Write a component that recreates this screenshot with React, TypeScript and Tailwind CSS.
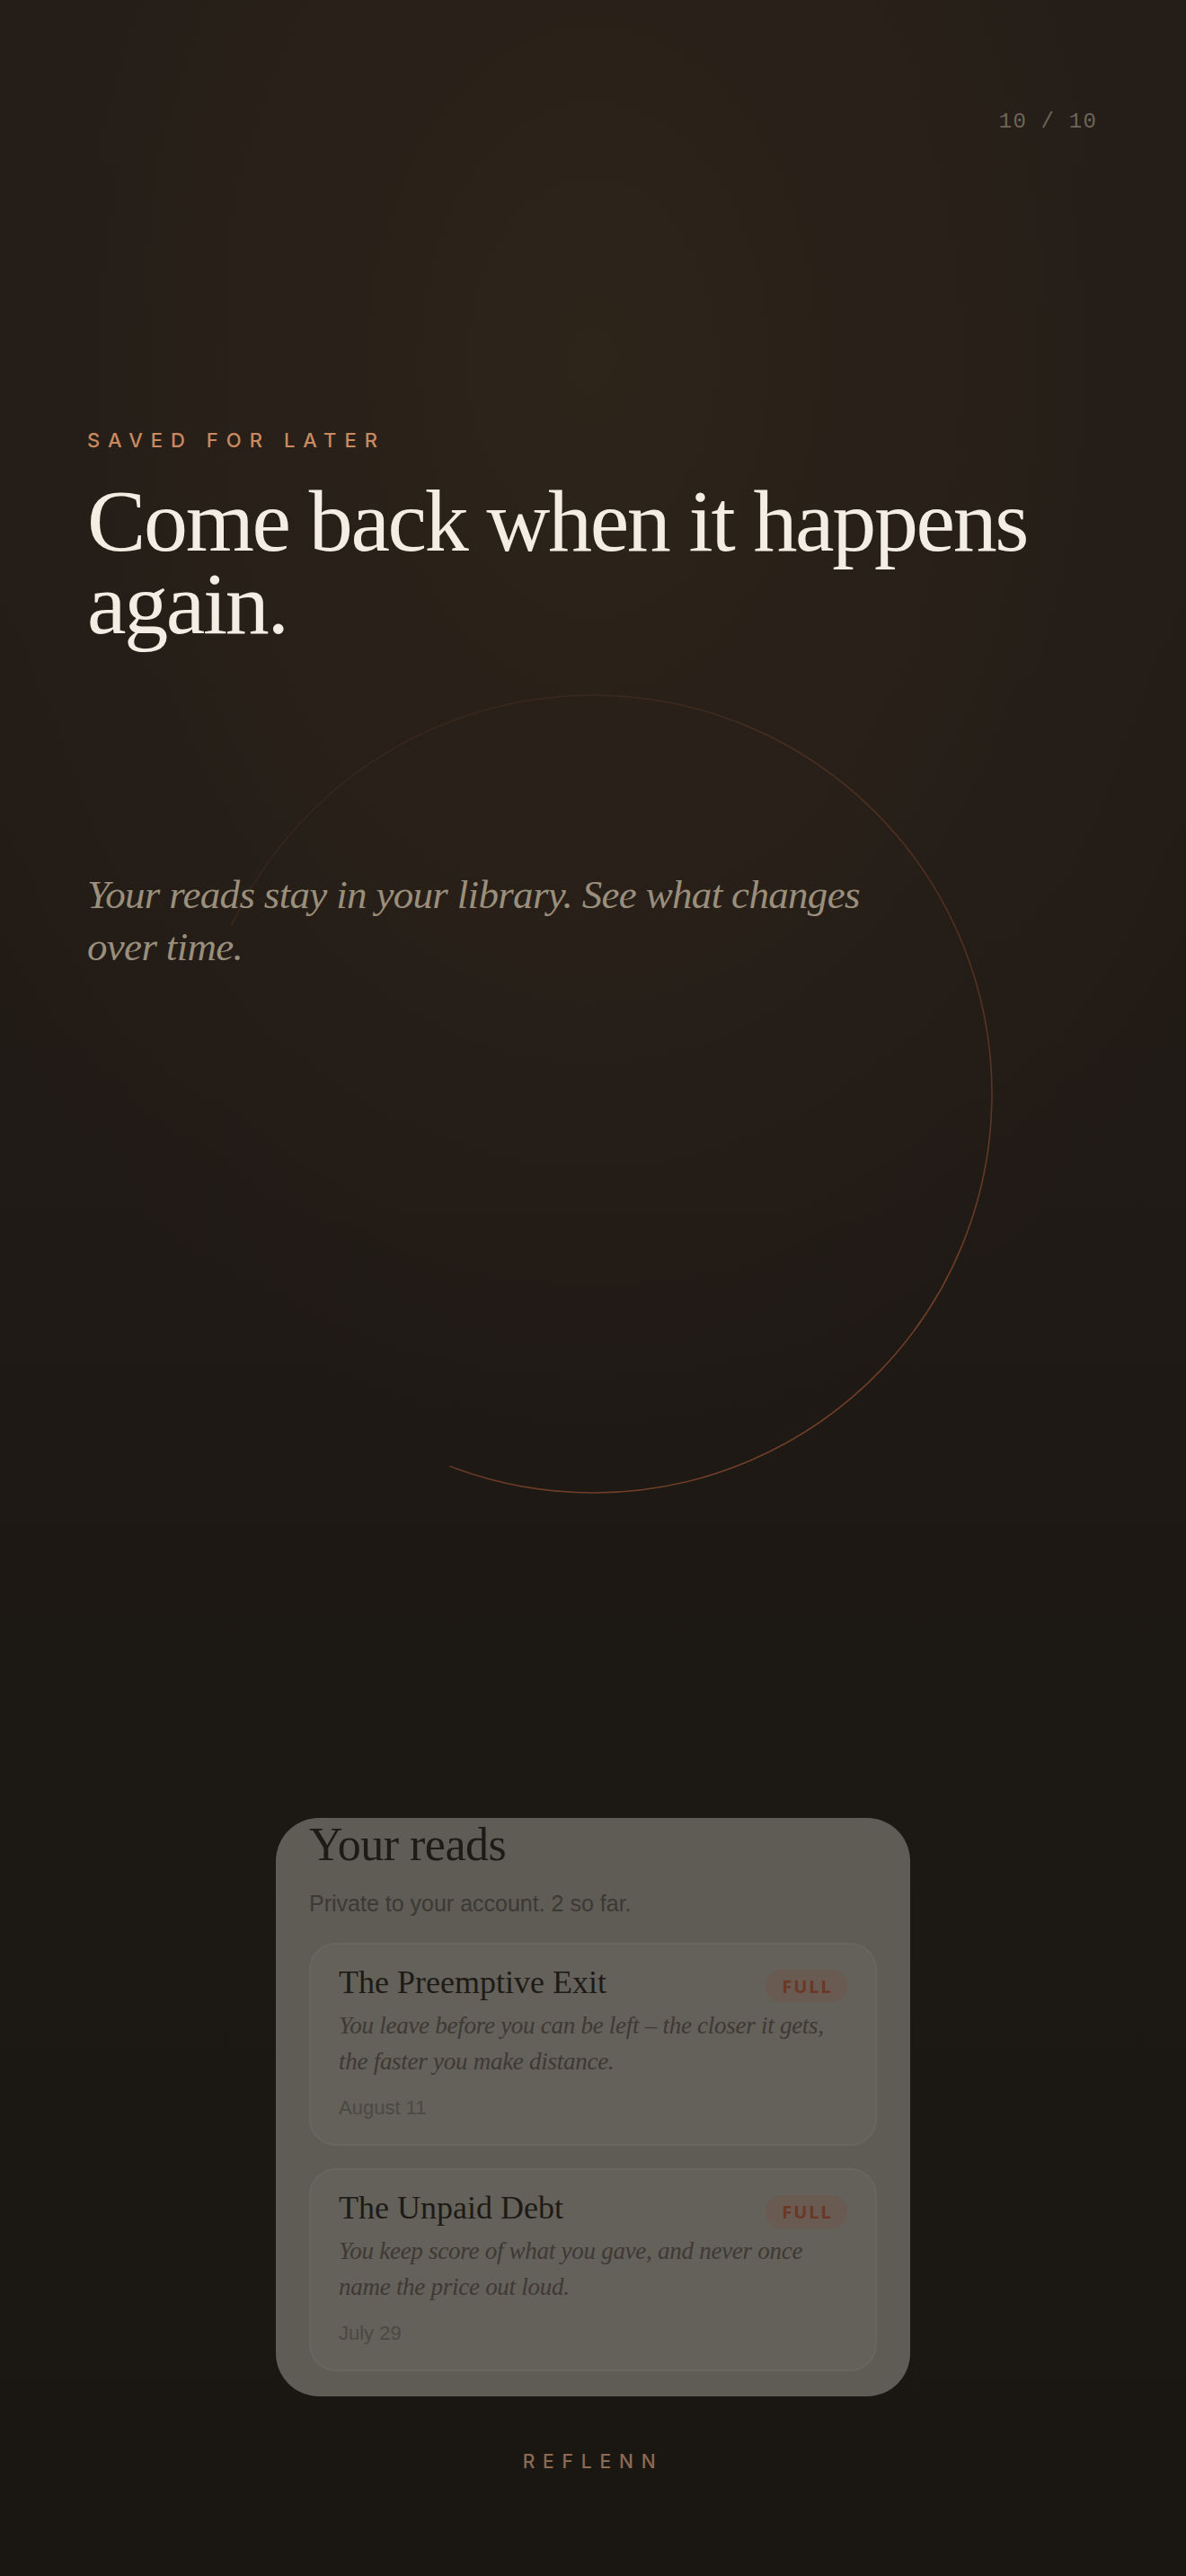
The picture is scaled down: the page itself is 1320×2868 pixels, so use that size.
import React from 'react';

const reads = [
  {
    id: 'preemptive-exit',
    title: 'The Preemptive Exit',
    line: 'You leave before you can be left – the closer it gets, the faster you make distance.',
    date: 'August 11',
  },
  {
    id: 'unpaid-debt',
    title: 'The Unpaid Debt',
    line: 'You keep score of what you gave, and never once name the price out loud.',
    date: 'July 29',
  },
];

function Ring() {
  // open ring behind the intro copy, gap in the lower left
  return (
    <svg
      className="pointer-events-none absolute left-0 top-0"
      width="1320"
      height="2868"
      viewBox="0 0 1320 2868"
      fill="none"
    >
      <defs>
        <linearGradient id="ringFade" gradientUnits="userSpaceOnUse" x1="620" y1="1680" x2="250" y2="1000">
          <stop offset="0" stopColor="#7a4128" stopOpacity="0.9" />
          <stop offset="0.35" stopColor="#5e3524" stopOpacity="0.8" />
          <stop offset="0.8" stopColor="#553324" stopOpacity="0.75" />
          <stop offset="1" stopColor="#4e3022" stopOpacity="0.4" />
        </linearGradient>
      </defs>
      <path
        d="M 500.9 1632.5 A 444 444 0 1 0 257.6 1030.4"
        stroke="url(#ringFade)"
        strokeWidth="1.6"
        strokeLinecap="round"
      />
    </svg>
  );
}

function ReadCard({ title, line, date }: { title: string; line: string; date: string }) {
  return (
    <div className="rounded-[30px] border-2 border-[#69655f] bg-[#64605a] px-[31px] pb-[26px] pt-[20px]">
      <div className="flex items-start justify-between gap-4">
        <h3 className="font-['Liberation_Serif',serif] text-[36px] leading-[44px] text-[#1e1b17]">{title}</h3>
        <span className="mt-[8px] flex h-[37px] w-[91px] shrink-0 items-center justify-center rounded-full bg-[#695a52] pl-[2px] font-['Noto_Sans',sans-serif] text-[20px] font-bold leading-none tracking-[0.1em] text-[#6b3826]">
          FULL
        </span>
      </div>
      <p className="mt-[5px] font-['Liberation_Serif',serif] text-[27px] italic leading-[40px] tracking-[-0.01em] text-[#3e3934]">
        {line}
      </p>
      <p className="mt-[18px] font-['Liberation_Sans',sans-serif] text-[22px] leading-[28px] text-[#4c4842]">{date}</p>
    </div>
  );
}

export default function App() {
  return (
    <div className="relative min-h-[2868px] w-full overflow-hidden bg-[radial-gradient(ellipse_62%_42%_at_50%_14%,#2d241a_0%,#271f18_55%,rgba(35,29,23,0)_100%),linear-gradient(180deg,#231d17_0%,#211b16_40%,#1c1814_65%,#1a1713_100%)]">
      <Ring />

      <div className="relative flex flex-col">
        <div className="flex justify-end pr-[99px] pt-[124px]">
          <span className="font-['Liberation_Mono',monospace] text-[24px] leading-[24px] tracking-[0.05em] text-[#6e655b]">
            10 / 10
          </span>
        </div>

        <div className="px-[97px]">
          <p className="mt-[329px] font-['Inter',sans-serif] text-[22px] font-medium leading-[26px] tracking-[0.41em] text-[#c98a62]">
            SAVED FOR LATER
          </p>
          <h1 className="mt-[31px] font-['Liberation_Serif',serif] text-[98px] leading-[92px] tracking-[-0.024em] text-[#f4ede3]">
            Come back when it happens again.
          </h1>
          <p className="mt-[249px] max-w-[920px] font-['Liberation_Serif',serif] text-[45px] italic leading-[58px] tracking-[-0.015em] text-[#9a8e7c]">
            Your reads stay in your library. See what changes over time.
          </p>
        </div>

        <div className="mx-auto mt-[941px] w-[706px] rounded-[48px] bg-[#5f5b55] px-[37px] pb-[28px] pt-[2px]">
          <h2 className="font-['Liberation_Serif',serif] text-[52px] leading-[56px] tracking-[-0.01em] text-[#1e1b17]">Your reads</h2>
          <p className="mt-[21px] font-['Liberation_Sans',sans-serif] text-[25px] leading-[32px] text-[#3c3934]">
            Private to your account. 2 so far.
          </p>
          <div className="mt-[28px] flex flex-col gap-[25px]">
            {reads.map((r) => (
              <ReadCard key={r.id} title={r.title} line={r.line} date={r.date} />
            ))}
          </div>
        </div>

        <p className="mt-[61px] pb-[100px] text-center font-['Inter',sans-serif] text-[21px] font-medium leading-[24px] tracking-[0.42em] text-[#8c6a54]">
          REFLENN
        </p>
      </div>
    </div>
  );
}
